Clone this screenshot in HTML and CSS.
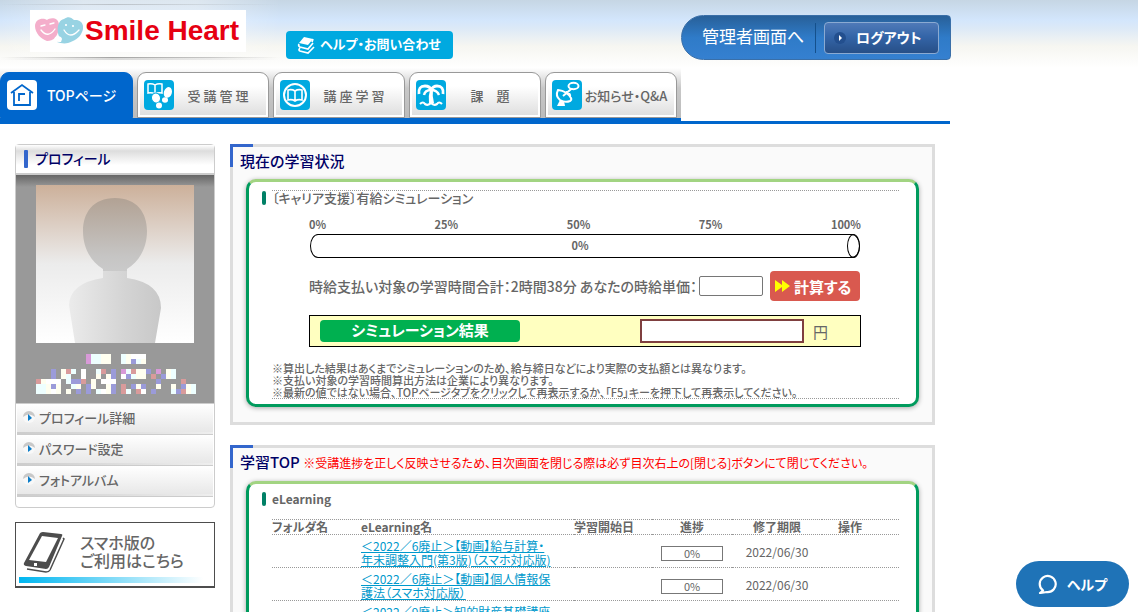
FILE: index.html
```html
<!DOCTYPE html>
<html lang="ja">
<head>
<meta charset="utf-8">
<meta name="viewport" content="width=device-width, initial-scale=1">
<title>Smile Heart</title>
<link rel="stylesheet" href="styles.css">
</head>
<body>
<header class="header">
  <div class="page header-row">
    <div class="brand-area">
      <a class="brand" href="#">
        <svg class="brand-mark" viewBox="0 0 48 28" aria-hidden="true">
          <path d="M12 3C15 0 24 0 24 8c0 7-2 10-4 13-2 2-5 3-8 3C6 22 0 16 0 9 0 2 8 0 12 3z" fill="#f4aecb"/>
          <path d="M29 2c4-3 7-2 10 1 8-1 11 6 8 12-2 6-8 9-14 11-4 1-8 0-11-1 2-1 3-2 3-4-4-5-3-18 4-19z" fill="#98d3e3"/>
          <path d="M20 20q6-2 7 2l-1 3q-5 0-7-2z" fill="#fff"/>
          <path d="M6 9l4-1m5-1 4-1M6 13q7 9 14-1M29 13q6 10 15 0" fill="none" stroke="#fff" stroke-width="1.3" stroke-linecap="round"/>
          <circle cx="31" cy="8" r="1.1" fill="#fff"/><circle cx="38" cy="9" r="1.1" fill="#fff"/>
        </svg>
        <span>Smile Heart</span>
      </a>
    </div>
    <a class="help-link" href="#">
      <svg viewBox="0 0 18 17" class="books" aria-hidden="true">
        <path d="M7 0l9 2-5 6-9-2z" fill="#fff"/>
        <path d="M2 7q-1 2 1 3l8 2 5-6M3 11q-2 2 0 3l8 2 6-6M16 2l-1 3" fill="none" stroke="#fff" stroke-width="1.7"/>
      </svg>
      <span>ヘルプ・お問い合わせ</span>
    </a>
    <div class="account">
      <a class="admin" href="#">管理者画面へ</a>
      <button class="logout" type="button">
        <svg viewBox="0 0 12 12" aria-hidden="true"><circle cx="6" cy="6" r="6" fill="#234f8e"/><path d="M5 3l3 3-3 3z" fill="#fff"/></svg>
        <span>ログアウト</span>
      </button>
    </div>
  </div>
</header>

<nav class="page nav">
  <div class="tabs">
    <a class="tab active" href="#">
      <svg viewBox="0 0 30 30" class="tab-icon" aria-hidden="true"><rect width="30" height="30" rx="4" fill="#fff"/><path d="M4 13L15 5l11 8M7 12v13h16V12M12 21v-7h6" fill="none" stroke="#0066cc" stroke-width="1.8"/></svg>
      <span>TOPページ</span>
    </a>
    <a class="tab" href="#">
      <svg viewBox="0 0 30 30" class="tab-icon" aria-hidden="true"><rect width="30" height="30" rx="4" fill="#00a9e0"/><path d="M4 4q4-1 7 1 3-2 7-1v9q-4-1-7 1-3-2-7-1zM11 5v9" fill="none" stroke="#fff" stroke-width="1.5"/><g fill="#fff"><ellipse cx="12" cy="18" rx="4.500" ry="5" stroke="#00a9e0" transform="rotate(-18 12 18)"/><ellipse cx="15" cy="25.500" rx="3" ry="3"/><ellipse cx="24" cy="12.500" rx="4" ry="5.500" transform="rotate(18 24 12)"/><ellipse cx="21" cy="20" rx="3" ry="2.800"/></g></svg>
      <span>受 講 管 理</span>
    </a>
    <a class="tab" href="#">
      <svg viewBox="0 0 30 30" class="tab-icon" aria-hidden="true"><rect width="30" height="30" rx="4" fill="#00a9e0"/><circle cx="15" cy="15" r="11" fill="none" stroke="#fff" stroke-width="2"/><path d="M8 10q4-1 7 1 3-2 7-1v10q-4-1-7 1-3-2-7-1zM15 11v10" fill="none" stroke="#fff" stroke-width="1.6"/></svg>
      <span>講 座 学 習</span>
    </a>
    <a class="tab" href="#">
      <svg viewBox="0 0 30 30" class="tab-icon" aria-hidden="true"><rect width="30" height="30" rx="4" fill="#00a9e0"/><path d="M3 14Q2 6 9 6q5 0 6 4 2-4 6-4 7 0 6 8" fill="none" stroke="#fff" stroke-width="2.800"/><path d="M8 15q1-5 7-5 6 0 8 5" fill="none" stroke="#fff" stroke-width="2.500"/><path d="M14 10q-2 6-1 13h5q-2-7-1-13z" fill="#fff"/><path d="M4 24q3-3 5 0 3 2 6-1 3 3 6 1 2-3 5 0" fill="none" stroke="#fff" stroke-width="2.200"/></svg>
      <span>課　題</span>
    </a>
    <a class="tab" href="#">
      <svg viewBox="0 0 30 30" class="tab-icon" aria-hidden="true"><rect width="30" height="30" rx="4" fill="#00a9e0"/><g fill="none" stroke="#fff" stroke-width="2"><ellipse cx="21.500" cy="6" rx="5" ry="3.200"/><path d="M6 10q-3 6 2 10 5 3 10 1 2-1 1-3-4-7-13-8zM11 16l7-6q2-2 2 0M18 17q1-4-4-5"/></g><path d="M8 20l-3 6h8l-1-5z" fill="#fff"/></svg>
      <span>お知らせ・Q&amp;A</span>
    </a>
  </div>
</nav>

<div class="page layout">
  <aside class="sidebar">
    <section class="profile">
      <h2>プロフィール</h2>
      <div class="photo">
        <svg class="avatar" viewBox="0 0 158 158" role="img" aria-label="プロフィール写真">
          <defs>
            <linearGradient id="bg" x2="0" y2="1"><stop offset="0" stop-color="#ccb09a"/><stop offset=".5" stop-color="#ececec"/><stop offset="1" stop-color="#fff"/></linearGradient>
            <linearGradient id="head" x2="0" y2="1"><stop offset="0" stop-color="#b2a294"/><stop offset=".8" stop-color="#c6c5c4"/><stop offset="1" stop-color="#cacaca"/></linearGradient>
            <linearGradient id="bust"><stop offset="0" stop-color="#ebebeb"/><stop offset=".6" stop-color="#d4d4d4"/><stop offset="1" stop-color="#c8c8c8"/></linearGradient>
          </defs>
          <rect width="158" height="158" fill="url(#bg)"/>
          <path d="M67 80h24v13q34 5 34 30l-6 35H39l-6-38q1-22 34-27z" fill="url(#bust)"/>
          <path d="M79 13c22 0 32 15 32 33 0 17-8 31-20 38v2H67v-2C55 77 47 63 47 46c0-18 10-33 32-33z" fill="url(#head)"/>
        </svg>
        <svg class="mosaic" viewBox="0 0 32 8" shape-rendering="crispEdges" aria-hidden="true">
          <path fill="#d89ad8" d="M10 0h1v2h-1zM17 3h1v1h-1zM24 3h1v1h-1z"/>
          <path fill="#eff" d="M11 0h2v2h-2zM17 0h1v2h-1zM20 1h1v1h-1zM7 3h1v1H7zM6 4h1v2H6zM12 3h1v1h-1zM18 3h1v1h-1zM19 4h1v1h-1zM27 3h1v2h-1zM0 6h2v2H0zM7 6h1v1H7zM14 6h1v1h-1zM12 7h1v1h-1zM18 7h1v1h-1zM31 6h1v2h-1zM27 7h1v1h-1z"/>
          <path fill="#fffff0" d="M13 0h2v2h-2zM18 0h1v2h-1zM21 1h1v1h-1zM5 3h1v2H5zM20 3h2v2h-2zM12 4h1v1h-1zM14 4h1v4h-1zM26 3h1v2h-1zM1 5h1v1H1zM11 5h1v1h-1zM2 6h1v2H2zM4 6h1v2H4zM8 6h1v1H8zM6 7h1v1H6zM11 6h1v1h-1zM20 6h1v1h-1zM24 6h1v1h-1zM27 6h1v1h-1zM30 6h1v2h-1z"/>
          <path fill="#fff" d="M19 0h3v1h-3zM9 3h1v2H9zM17 4h1v1h-1zM2 5h3v1H2zM13 5h3v1h-3zM3 7h1v1H3zM13 7h1v1h-1zM21 7h1v1h-1z"/>
          <path fill="#9b9bd9" d="M19 1h1v1h-1zM3 3h1v2H3zM15 3h1v2h-1zM22 3h1v1h-1zM18 4h1v1h-1zM7 5h2v1H7zM24 5h1v1h-1zM25 4h1v1h-1zM3 6h1v1H3zM10 6h1v2h-1zM15 6h1v2h-1zM19 6h1v1h-1zM21 6h1v1h-1zM8 7h1v1H8zM23 7h1v1h-1zM28 7h1v1h-1zM29 6h1v1h-1z"/>
          <path fill="#d99b9b" d="M6 3h1v1H6zM13 3h1v1h-1zM19 3h1v1h-1zM23 4h1v1h-1zM0 5h1v1H0zM9 5h1v1H9zM29 5h1v1h-1zM17 6h1v2h-1zM20 7h1v1h-1zM29 7h1v1h-1z"/>
        </svg>
      </div>
      <ul class="side-menu">
        <li><a href="#"><svg viewBox="0 0 12 12" aria-hidden="true"><circle cx="6" cy="6" r="6" fill="#f8f8f8"/><path d="M0 6a6 6 0 0 1 12 0q-6-5-12 0z" fill="#c8c8c8"/><path d="M5 3l4 4-4 3z" fill="#0a7cc8"/></svg>プロフィール詳細</a></li>
        <li><a href="#"><svg viewBox="0 0 12 12" aria-hidden="true"><circle cx="6" cy="6" r="6" fill="#f8f8f8"/><path d="M0 6a6 6 0 0 1 12 0q-6-5-12 0z" fill="#c8c8c8"/><path d="M5 3l4 4-4 3z" fill="#0a7cc8"/></svg>パスワード設定</a></li>
        <li><a href="#"><svg viewBox="0 0 12 12" aria-hidden="true"><circle cx="6" cy="6" r="6" fill="#f8f8f8"/><path d="M0 6a6 6 0 0 1 12 0q-6-5-12 0z" fill="#c8c8c8"/><path d="M5 3l4 4-4 3z" fill="#0a7cc8"/></svg>フォトアルバム</a></li>
      </ul>
    </section>
    <a class="mobile" href="#">
      <span class="mobile-body">
        <svg viewBox="0 0 42 42" aria-hidden="true"><path d="M20 1l18 2q2 0 1 2L26 36q-1 2-3 2L3 35q-3-1-2-3L16 4q1-3 4-3z" fill="#4d4d4d"/><path d="M19 5l16 2-12 24-17-2z" fill="#fff"/><path d="M40 7l1 1-14 31q-1 2-4 2L4 38" fill="none" stroke="#4d4d4d" stroke-width="1.500"/><rect x="11" y="32" width="3" height="3" fill="#fff"/></svg>
        <span>スマホ版の<br>ご利用はこちら</span>
      </span>
      <span class="mobile-line"></span>
    </a>
  </aside>

  <main class="main">
    <section class="panel">
      <h2>現在の学習状況</h2>
      <div class="card">
        <div class="sim">
          <h3>〔キャリア支援〕有給シミュレーション</h3>
          <div class="sim-body">
            <div class="scale"><span>0%</span><span>25%</span><span>50%</span><span>75%</span><span>100%</span></div>
            <div class="meter"><span>0%</span><i class="meter-cap"></i></div>
            <form class="wage">
              <label for="wage">時給支払い対象の学習時間合計：2時間38分 あなたの時給単価：</label>
              <input id="wage" type="text">
              <button type="button"><svg viewBox="0 0 15 12" aria-hidden="true"><path d="M0 0l7 5V0l8 6-8 6V7l-7 5z" fill="#ff0"/></svg>計算する</button>
            </form>
            <div class="result">
              <label for="result">シミュレーション結果</label>
              <input id="result" type="text" readonly>
              <span>円</span>
            </div>
          </div>
          <p class="notes">※算出した結果はあくまでシミュレーションのため、給与締日などにより実際の支払額とは異なります。<br>※支払い対象の学習時間算出方法は企業により異なります。<br>※最新の値ではない場合、TOPページタブをクリックして再表示するか、「F5」キーを押下して再表示してください。</p>
        </div>
      </div>
    </section>

    <section class="panel">
      <h2>学習TOP <small>※受講進捗を正しく反映させるため、目次画面を閉じる際は必ず目次右上の[閉じる]ボタンにて閉じてください。</small></h2>
      <div class="card">
        <h3>eLearning</h3>
        <table class="courses">
          <thead><tr><th class="c-folder">フォルダ名</th><th class="c-name">eLearning名</th><th class="c-start">学習開始日</th><th class="c-rate">進捗</th><th class="c-end">修了期限</th><th class="c-act">操作</th></tr></thead>
          <tbody>
            <tr><td></td><td><a href="#">＜2022／6廃止＞【動画】給与計算・<br>年末調整入門(第3版)（スマホ対応版)</a></td><td></td><td class="c-rate"><span class="rate">0%</span></td><td class="c-end">2022/06/30</td><td></td></tr>
            <tr><td></td><td><a href="#">＜2022／6廃止＞【動画】個人情報保<br>護法（スマホ対応版）</a></td><td></td><td class="c-rate"><span class="rate">0%</span></td><td class="c-end">2022/06/30</td><td></td></tr>
            <tr><td></td><td><a href="#">＜2022／9廃止＞知的財産基礎講座</a></td><td></td><td></td><td></td><td></td></tr>
          </tbody>
        </table>
      </div>
    </section>
  </main>
</div>

<button class="help-fab" type="button">
  <svg viewBox="0 0 20 20" aria-hidden="true"><path d="M5 16.500A8 8 0 1 1 9 18L2 19z" fill="none" stroke="#fff" stroke-width="2.200" stroke-linejoin="round"/></svg>
  <span>ヘルプ</span>
</button>
</body>
</html>
```
FILE: styles.css
```css
* { box-sizing: border-box; }
html { scrollbar-width: none; }
body {
  margin: 0;
  background: #fff;
  color: #666;
  font-family: "Noto Sans CJK JP", sans-serif;
  font-size: 12px;
  font-feature-settings: "palt";
}
h2, h3, p, ul { margin: 0; padding: 0; }
a { color: inherit; text-decoration: none; }
button, input { font: inherit; font-feature-settings: inherit; }
svg { flex: none; display: block; }
.page { max-width: 951px; }

.header { background: linear-gradient(#c6d6e4, #d3e6fc 20px, #dce9f7 28px, #f6f6f1 46px, #fff 68px); }
.header-row { display: flex; align-items: flex-start; height: 68px; }
.brand-area {
  width: 280px;
  height: 60px;
  padding: 10px 0 0 30px;
  background:
    linear-gradient(90deg, #0000, #777a 40%, #7776 75%, #0000) 0 57px / 100% 1px no-repeat,
    linear-gradient(90deg, #0000, #7774 40%, #7772 75%, #0000) 0 58px / 100% 2px no-repeat,
    linear-gradient(90deg, #0000, #7775 40%, #0000) 0 4px / 100% 1px no-repeat,
    linear-gradient(90deg, #fff0, #fff6 30%, #fff6 70%, #fff0);
}
.brand {
  display: flex;
  align-items: center;
  gap: 2px;
  width: 216px;
  height: 42px;
  padding-left: 5px;
  background: #fff;
  color: #e60012;
  font: bold 28px/42px "Liberation Sans", sans-serif;
  white-space: nowrap;
}
.brand-mark { width: 48px; height: 28px; }
.help-link {
  display: flex;
  align-items: center;
  gap: 5px;
  height: 28px;
  margin: 31px 0 0 6px;
  padding: 0 12px 0 11px;
  border-radius: 4px;
  background: #00a9e0;
  color: #fff;
  font-size: 13px;
  font-weight: bold;
  white-space: nowrap;
}
.help-link span { line-height: 26px; height: 28px; }
.books { width: 18px; height: 17px; }
.account {
  display: flex;
  align-items: center;
  width: 270px;
  height: 45px;
  margin: 15px 0 0 auto;
  padding-right: 11px;
  border: 1px solid #3a6fa8;
  border-radius: 23px 4px 4px 23px;
  background: linear-gradient(#286099, #2f7bc8 50%, #3580d0);
}
.admin {
  flex: 1;
  height: 30px;
  padding-left: 20px;
  border-right: 1px solid #14508c;
  color: #fff;
  font-size: 17px;
  line-height: 26px;
  white-space: nowrap;
}
.logout {
  display: flex;
  align-items: center;
  gap: 10px;
  width: 115px;
  height: 32px;
  margin-left: 8px;
  padding: 0 9px;
  border: 1px solid #8aaad2;
  border-radius: 4px;
  background: linear-gradient(#4f7ab8, #3465a8 45%, #274f87);
  color: #fff;
  font-size: 14px;
  font-weight: bold;
  line-height: 26px;
  white-space: nowrap;
}
.logout svg { width: 12px; height: 12px; }
.logout span { height: 28px; }

.nav { background: linear-gradient(#06c, #06c) 0 100% / calc(100% - 1px) 3px no-repeat; }
.tabs {
  display: flex;
  gap: 4px;
  width: 681px;
  padding-top: 4px;
  border-bottom: 6px solid #06c;
  background: linear-gradient(#fff, #c8c8c8 40%, #bbb);
}
.tab {
  display: flex;
  align-items: center;
  width: 132px;
  height: 46px;
  padding: 0 6px;
  border: 1px solid #999;
  border-radius: 9px 9px 0 0;
  background: linear-gradient(#fff 30%, #ddd);
  box-shadow: inset 0 0 0 2px #fff;
  font-size: 13px;
  font-weight: 500;
  white-space: nowrap;
}
.tab.active {
  width: 133px;
  border-color: #06c;
  background: #06c;
  box-shadow: none;
  color: #fff;
  font-size: 14px;
}
.tab-icon { width: 30px; height: 30px; }
.tab span { flex: 1; text-align: center; }

.layout {
  display: grid;
  grid-template-columns: 200px minmax(0, 1fr);
  gap: 15px;
  padding: 20px 16px 0 15px;
}
.profile {
  border: 1px solid #ccc;
  border-radius: 4px;
  padding-bottom: 10px;
}
.profile h2 {
  height: 30px;
  padding: 5px 8px;
  border-bottom: 2px solid #ccc;
  background: linear-gradient(#fff, #ddd 6px, #fff 20px);
  color: #006;
  font-size: 14px;
  font-weight: 500;
  line-height: 16px;
}
.profile h2::before {
  content: "";
  float: left;
  width: 4px;
  height: 18px;
  margin-right: 7px;
  border-radius: 1px;
  background: #36c;
}
.photo {
  padding: 10px 17px 9px 20px;
  background: linear-gradient(#666, #999 12px);
}
.avatar { width: 158px; }
.mosaic { width: 160px; height: 40px; margin-top: 11px; }
.side-menu { list-style: none; border-top: 1px solid #ccc; }
.side-menu a {
  display: flex;
  align-items: center;
  gap: 4px;
  height: 31px;
  margin: 0 1px;
  padding: 0 6px 4px;
  border-bottom: 1px solid #ccc;
  background: linear-gradient(90deg, #ccc, #eee) 0 28px / 100% 2px no-repeat, linear-gradient(#fff, #e6e6e6);
  font-size: 13px;
  font-weight: 500;
}
.side-menu svg { width: 12px; height: 12px; }
.mobile {
  display: block;
  height: 66px;
  margin-top: 14px;
  padding: 8px 3px 0;
  border: 1px solid #4d4d4d;
  border-bottom-width: 2px;
}
.mobile-body {
  display: flex;
  gap: 15px;
  height: 46px;
  padding-left: 4px;
  font-size: 16px;
  font-weight: 500;
  line-height: 18px;
  white-space: nowrap;
}
.mobile-body span { padding-top: 2px; }
.mobile-body svg { width: 42px; height: 42px; }
.mobile-line { display: block; height: 6px; background: linear-gradient(90deg, #00b6f0, #fff 96%); }

.main { display: grid; gap: 20px; align-content: start; }
.panel {
  position: relative;
  padding: 3px 13px 15px;
  border: 3px solid #ddd;
  background: #fafafa;
}
.panel::before {
  content: "";
  position: absolute;
  left: -3px;
  top: -3px;
  width: 20px;
  height: 20px;
  border: solid #36c;
  border-width: 3px 0 0 3px;
}
.panel h2 {
  margin-left: -6px;
  padding-bottom: 7px;
  color: #006;
  font-size: 15px;
  font-weight: 500;
  line-height: 22px;
  white-space: nowrap;
}
.panel h2 small { color: #f00; font-size: 12px; font-weight: 400; }
.card {
  padding: 8px 17px 5px 23px;
  border: 3px solid #009b5d;
  border-top-color: #a2d482;
  border-radius: 10px;
  background: #fff;
  box-shadow: 0 1px 5px #0005;
}
.card h3 {
  position: relative;
  font-size: 12px;
  font-weight: bold;
  line-height: 14px;
}
.card h3::before {
  content: "";
  position: absolute;
  left: -10px;
  top: 0;
  width: 4px;
  height: 14px;
  border-radius: 2px;
  background: #008066;
}
.sim { border: dotted #999; border-width: 1px 0; }
.card .sim h3 { font-size: 13px; font-weight: 500; }
.sim-body { margin: 13px 38px 0 37px; }
.scale {
  display: flex;
  justify-content: space-between;
  padding-bottom: 3px;
  font-size: 11px;
  font-weight: bold;
  line-height: 13px;
}
.meter {
  position: relative;
  height: 24px;
  margin: 0 1px;
  border: 1px solid #000;
  border-radius: 8px / 12px;
  padding-right: 10px;
  text-align: center;
  font-size: 11px;
  font-weight: bold;
  line-height: 20px;
}
.meter-cap {
  position: absolute;
  right: -1px;
  top: -1px;
  width: 13px;
  height: 24px;
  border: 1px solid #000;
  border-radius: 50%;
}
.wage {
  display: flex;
  align-items: center;
  height: 30px;
  margin: 13px 1px 0 0;
  font-size: 14px;
  font-weight: 500;
  white-space: nowrap;
}
.wage label { flex: 1; min-width: 0; }
.wage input {
  width: 64px;
  height: 20px;
  margin-right: 7px;
  border: 1px solid #767676;
  border-radius: 2px;
}
.wage button {
  display: flex;
  align-items: center;
  gap: 4px;
  width: 90px;
  height: 30px;
  padding: 0 5px;
  border: 0;
  border-radius: 4px;
  background: #d9594f;
  color: #fff;
  font-size: 15px;
  font-weight: bold;
}
.wage button svg { width: 15px; height: 12px; }
.result {
  display: flex;
  align-items: center;
  height: 32px;
  margin-top: 14px;
  padding: 0 32px 0 10px;
  border: 1px solid #000;
  background: #ffffc0;
  font-size: 15px;
}
.result label {
  width: 200px;
  height: 22px;
  border-radius: 4px;
  background: #00b050;
  color: #fff;
  font-size: 15px;
  font-weight: bold;
  line-height: 19px;
  text-align: center;
}
.result input {
  width: 164px;
  height: 24px;
  margin: 0 9px 0 auto;
  border: 2px solid #7f3f3f;
  background: #fff;
}
.notes {
  margin-top: 15px;
  font-size: 11px;
  font-weight: 500;
  line-height: 12px;
  white-space: nowrap;
}

.courses {
  width: 100%;
  margin-top: 13px;
  border-collapse: collapse;
  table-layout: fixed;
  line-height: 14px;
}
.courses tr { border: dotted #999; border-width: 1px 0; }
.courses th { padding: 0; font-weight: bold; text-align: left; }
.courses td { padding: 4px 0 0; height: 33px; white-space: nowrap; vertical-align: top; }
.courses td a { color: #0099cc; text-decoration: underline; }
.courses .c-folder { width: 89px; }
.courses .c-name { width: 213px; }
.courses .c-start { width: 78px; }
.courses .c-rate { width: 80px; text-align: center; }
.courses .c-end { width: 90px; text-align: center; }
.courses td.c-end, .courses td.c-rate { padding: 2px 0 0; vertical-align: middle; }
.courses .c-act { padding-left: 16px; }
.rate {
  display: block;
  width: 62px;
  height: 15px;
  margin: 3px auto 0;
  border: 1px solid #777;
  font-size: 11px;
  line-height: 12px;
}

.help-fab {
  position: fixed;
  right: 9px;
  bottom: 5px;
  display: flex;
  align-items: center;
  gap: 9px;
  height: 46px;
  padding: 0 22px;
  border: 0;
  border-radius: 23px;
  background: #1f73b7;
  color: #fff;
  font-size: 14px;
  font-weight: bold;
}
.help-fab svg { width: 20px; height: 20px; }
```
